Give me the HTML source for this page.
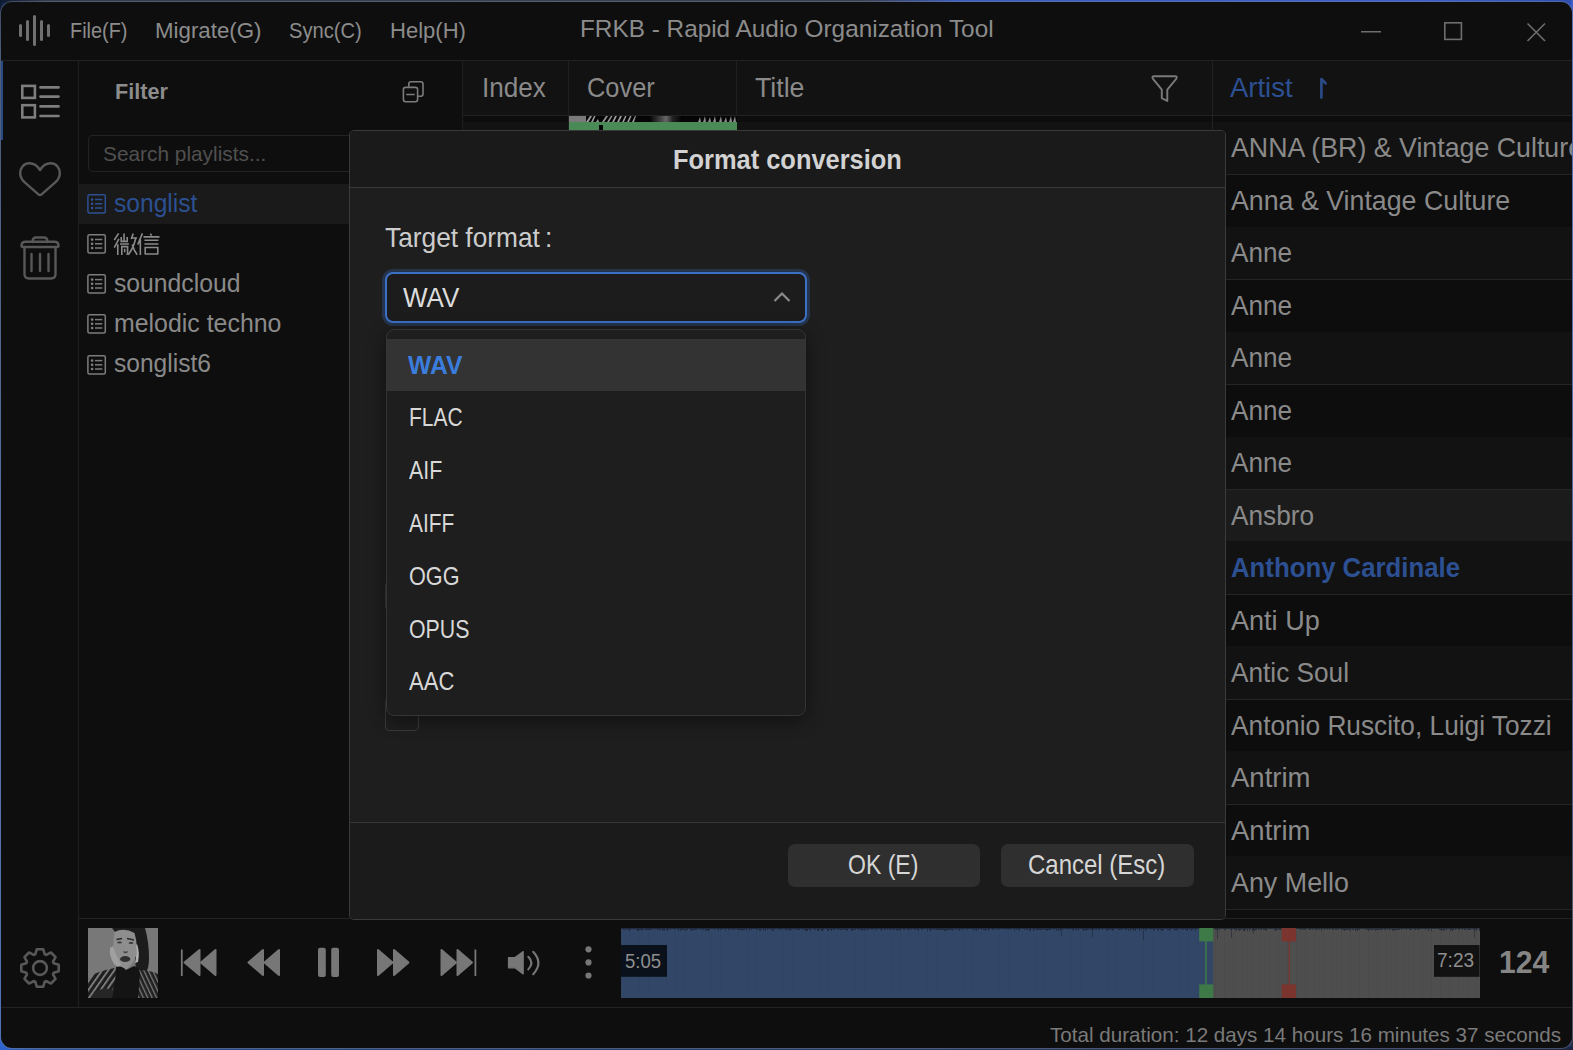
<!DOCTYPE html>
<html><head><meta charset="utf-8"><style>
html,body{margin:0;padding:0;width:1573px;height:1050px;overflow:hidden}
body{background:radial-gradient(ellipse at 0% 100%,#2a64d0 0%,rgba(42,100,208,0) 40%),radial-gradient(ellipse at 100% 0%,#3050c0 0%,rgba(48,80,192,0) 40%),linear-gradient(180deg,#13284e 0%,#1a3060 100%);font-family:"Liberation Sans",sans-serif;position:relative}
.abs{position:absolute}
.t{position:absolute;white-space:nowrap;line-height:1;transform-origin:0 0}
.bar{position:absolute;width:3px;background:#707070;border-radius:1.5px}
#win{position:absolute;left:1px;top:2px;width:1571px;height:1046px;background:#0e0e0e;border-radius:11px;overflow:hidden;box-shadow:0 0 0 1px rgba(120,130,150,0.45)}
#in{position:absolute;left:-1px;top:-2px;width:1573px;height:1050px}
</style></head><body>
<div class="abs" style="left:0;top:0;width:1573px;height:3px;background:linear-gradient(90deg,#0d1a33 0%,#343c4c 3%,#3a4252 55%,#3a5cc0 61%,#3d5fc8 90%,#2f4fb0 100%)"></div>
<div class="abs" style="left:0;top:0;width:2px;height:1050px;background:linear-gradient(180deg,#0d1a33 0%,#2a3a60 5%,#3f68b8 60%,#2f63d0 100%)"></div>
<div class="abs" style="left:1571px;top:0;width:2px;height:1050px;background:linear-gradient(180deg,#3d5fc8 0%,#3a5ab8 35%,#303a68 70%,#2a2c44 100%)"></div>
<div class="abs" style="left:0;top:1047px;width:1573px;height:3px;background:linear-gradient(90deg,#2f63d0 0%,#2e4f90 3%,#2a4070 30%,#2a3a60 60%,#1e2440 100%)"></div>
<div id="win"><div id="in">
<div class="abs" style="left:0;top:60px;width:1573px;height:1px;background:#222"></div>
<div class="abs" style="left:462px;top:61px;width:1111px;height:54px;background:#121212"></div>
<div class="abs" style="left:78px;top:61px;width:1px;height:946px;background:#1f1f1f"></div>
<div class="abs" style="left:462px;top:61px;width:1px;height:857px;background:#1f1f1f"></div>
<div class="abs" style="left:463px;top:116px;width:1109px;height:6px;background:#0d0d0d"></div>
<div class="abs" style="left:463px;top:122px;width:1109px;height:52px;background:#121212"></div>
<div class="abs" style="left:463px;top:174px;width:1109px;height:53px;background:#0d0d0d"></div>
<div class="abs" style="left:463px;top:227px;width:1109px;height:52px;background:#121212"></div>
<div class="abs" style="left:463px;top:279px;width:1109px;height:53px;background:#0d0d0d"></div>
<div class="abs" style="left:463px;top:332px;width:1109px;height:52px;background:#121212"></div>
<div class="abs" style="left:463px;top:384px;width:1109px;height:53px;background:#0d0d0d"></div>
<div class="abs" style="left:463px;top:437px;width:1109px;height:52px;background:#121212"></div>
<div class="abs" style="left:463px;top:489px;width:1109px;height:52px;background:#1b1b1b"></div>
<div class="abs" style="left:463px;top:541px;width:1109px;height:53px;background:#121212"></div>
<div class="abs" style="left:463px;top:594px;width:1109px;height:52px;background:#0d0d0d"></div>
<div class="abs" style="left:463px;top:646px;width:1109px;height:53px;background:#121212"></div>
<div class="abs" style="left:463px;top:699px;width:1109px;height:52px;background:#0d0d0d"></div>
<div class="abs" style="left:463px;top:751px;width:1109px;height:53px;background:#121212"></div>
<div class="abs" style="left:463px;top:804px;width:1109px;height:52px;background:#0d0d0d"></div>
<div class="abs" style="left:463px;top:856px;width:1109px;height:53px;background:#121212"></div>
<div class="abs" style="left:463px;top:174px;width:1109px;height:1px;background:#252525"></div>
<div class="abs" style="left:463px;top:279px;width:1109px;height:1px;background:#252525"></div>
<div class="abs" style="left:463px;top:384px;width:1109px;height:1px;background:#252525"></div>
<div class="abs" style="left:463px;top:489px;width:1109px;height:1px;background:#252525"></div>
<div class="abs" style="left:463px;top:594px;width:1109px;height:1px;background:#252525"></div>
<div class="abs" style="left:463px;top:699px;width:1109px;height:1px;background:#252525"></div>
<div class="abs" style="left:463px;top:804px;width:1109px;height:1px;background:#252525"></div>
<div class="abs" style="left:463px;top:909px;width:1109px;height:1px;background:#252525"></div>
<div class="abs" style="left:568px;top:61px;width:1px;height:70px;background:#1f1f1f"></div>
<div class="abs" style="left:736px;top:61px;width:1px;height:70px;background:#1f1f1f"></div>
<div class="abs" style="left:1212px;top:61px;width:1px;height:70px;background:#222"></div>
<div class="abs" style="left:463px;top:115px;width:1110px;height:1px;background:#222"></div>
<div class="abs" style="left:78px;top:918px;width:1495px;height:1px;background:#232323"></div>
<div class="abs" style="left:0;top:1007px;width:1573px;height:1px;background:#222"></div>

<div class="t" style="left:69.70px;top:19.28px;font-size:22.82px;color:#8c8c8c;transform:scaleX(0.8710);">File(F)</div>
<div class="t" style="left:154.90px;top:19.28px;font-size:22.82px;color:#8c8c8c;transform:scaleX(0.9768);">Migrate(G)</div>
<div class="t" style="left:289.20px;top:19.28px;font-size:22.82px;color:#8c8c8c;transform:scaleX(0.8835);">Sync(C)</div>
<div class="t" style="left:390.10px;top:19.28px;font-size:22.82px;color:#8c8c8c;transform:scaleX(0.9667);">Help(H)</div>
<div class="t" style="left:579.60px;top:18.04px;font-size:23.11px;color:#8c8c8c;transform:scaleX(1.0533);">FRKB - Rapid Audio Organization Tool</div>
<div class="bar" style="left:19px;top:24px;height:13px"></div>
<div class="bar" style="left:26px;top:20px;height:21px"></div>
<div class="bar" style="left:33px;top:15px;height:31px"></div>
<div class="bar" style="left:40px;top:20px;height:21px"></div>
<div class="bar" style="left:47px;top:24px;height:13px"></div>
<svg class="abs" style="left:1350px;top:15px" width="210" height="35" viewBox="1350 15 210 35">
<line x1="1361" y1="31.8" x2="1381" y2="31.8" stroke="#6e6e6e" stroke-width="1.6"/>
<rect x="1444.8" y="22.8" width="16.6" height="16.6" fill="none" stroke="#6e6e6e" stroke-width="1.6"/>
<path d="M1527.5 23.5 L1545 41 M1545 23.5 L1527.5 41" stroke="#6e6e6e" stroke-width="1.6"/>
</svg>
<div class="abs" style="left:1px;top:61px;width:2px;height:79px;background:#2a4a82"></div>
<svg class="abs" style="left:0;top:60px" width="78" height="240" viewBox="0 60 78 240">
<g fill="none" stroke="#7e7e7e" stroke-width="2.6">
<rect x="22.3" y="85.9" width="12.6" height="12"/>
<rect x="22.3" y="105.2" width="12.6" height="12.2"/>
</g>
<g stroke="#7e7e7e" stroke-width="2.6" stroke-linecap="round">
<line x1="40.5" y1="87.4" x2="58.5" y2="87.4"/><line x1="40.5" y1="96.6" x2="58.5" y2="96.6"/>
<line x1="40.5" y1="106.4" x2="58.5" y2="106.4"/><line x1="40.5" y1="116" x2="58.5" y2="116"/>
</g>
<path d="M40 170 C37 165.2 33.2 163.3 29.5 163.3 C24 163.3 20.2 167.6 20.2 173.3 C20.2 176.8 21.6 179.4 24.2 181.8 L38.4 194.4 Q40 195.8 41.6 194.4 L55.8 181.8 C58.4 179.4 59.8 176.8 59.8 173.3 C59.8 167.6 56 163.3 50.5 163.3 C46.8 163.3 43 165.2 40 170 Z" fill="none" stroke="#585858" stroke-width="2.4" stroke-linejoin="round"/>
<g fill="none" stroke="#585858" stroke-width="2.4" stroke-linecap="round" stroke-linejoin="round">
<path d="M21.5 245.5 Q21.5 241.8 25.5 241.8 L54.5 241.8 Q58.5 241.8 58.5 245.5 Q58.5 247 57 247 L23 247 Q21.5 247 21.5 245.5 Z"/>
<path d="M32.5 242 Q32.5 237.5 36 237.5 L44 237.5 Q47.5 237.5 47.5 242"/>
<path d="M24.5 247 L24.5 274 Q24.5 278.5 29 278.5 L51 278.5 Q55.5 278.5 55.5 274 L55.5 247"/>
<line x1="31.5" y1="254" x2="31.5" y2="271"/><line x1="40" y1="254" x2="40" y2="271"/><line x1="48.5" y1="254" x2="48.5" y2="271"/>
</g>
</svg>
<svg class="abs" style="left:0;top:920px" width="78" height="88" viewBox="0 920 78 88">
<path d="M53.70 963.25 L58.72 964.75 L58.72 971.25 L53.70 972.75 L53.05 974.33 L55.54 978.94 L50.94 983.54 L46.33 981.05 L44.75 981.70 L43.25 986.72 L36.75 986.72 L35.25 981.70 L33.67 981.05 L29.06 983.54 L24.46 978.94 L26.95 974.33 L26.30 972.75 L21.28 971.25 L21.28 964.75 L26.30 963.25 L26.95 961.67 L24.46 957.06 L29.06 952.46 L33.67 954.95 L35.25 954.30 L36.75 949.28 L43.25 949.28 L44.75 954.30 L46.33 954.95 L50.94 952.46 L55.54 957.06 L53.05 961.67 Z" fill="none" stroke="#585858" stroke-width="2.6" stroke-linejoin="round"/>
<circle cx="40" cy="968" r="6.9" fill="none" stroke="#585858" stroke-width="2.6"/>
</svg>
<div class="t" style="left:114.50px;top:79.86px;font-size:22.97px;color:#8c8c8c;font-weight:bold;transform:scaleX(0.9403);">Filter</div>
<svg class="abs" style="left:395px;top:75px" width="35" height="35" viewBox="395 75 35 35">
<g fill="none" stroke="#7c7c7c" stroke-width="1.6">
<path d="M408.8 86.8 L408.8 84 Q408.8 81.8 411 81.8 L420.8 81.8 Q423 81.8 423 84 L423 94 Q423 96.2 420.8 96.2 L418 96.2"/>
<rect x="403.4" y="87.4" width="14.2" height="14.4" rx="2.2"/>
</g>
<line x1="406.2" y1="94.5" x2="414.8" y2="94.5" stroke="#7c7c7c" stroke-width="1.6"/>
</svg>
<div class="abs" style="left:88px;top:135px;width:300px;height:37px;border:1px solid #222;border-radius:4px;background:#0e0e0e;box-sizing:border-box"></div>
<div class="t" style="left:102.70px;top:143.51px;font-size:20.78px;color:#505050;transform:scaleX(1.0033);">Search playlists...</div>
<div class="abs" style="left:79px;top:184px;width:290px;height:40px;background:#1a1a1a"></div>
<svg class="abs" style="left:85px;top:192px" width="24" height="24" viewBox="85 192 24 24">
<rect x="87.9" y="194.7" width="17.4" height="18.4" rx="1.5" fill="none" stroke="#2c5092" stroke-width="1.5"/>
<g fill="#2c5092"><circle cx="92.1" cy="199.6" r="1.35"/><circle cx="92.1" cy="203.8" r="1.35"/><circle cx="92.1" cy="208" r="1.35"/></g>
<g stroke="#2c5092" stroke-width="1.5"><line x1="95" y1="199.6" x2="102.3" y2="199.6"/><line x1="95" y1="203.8" x2="102.3" y2="203.8"/><line x1="95" y1="208" x2="102.3" y2="208"/></g>
</svg>
<div class="t" style="left:113.90px;top:190.75px;font-size:25.81px;color:#2c5092;transform:scaleX(0.9541);">songlist</div>
<svg class="abs" style="left:85px;top:232px" width="24" height="24" viewBox="85 232 24 24">
<rect x="87.9" y="234.7" width="17.4" height="18.4" rx="1.5" fill="none" stroke="#7c7c7c" stroke-width="1.5"/>
<g fill="#7c7c7c"><circle cx="92.1" cy="239.6" r="1.35"/><circle cx="92.1" cy="243.8" r="1.35"/><circle cx="92.1" cy="248" r="1.35"/></g>
<g stroke="#7c7c7c" stroke-width="1.5"><line x1="95" y1="239.6" x2="102.3" y2="239.6"/><line x1="95" y1="243.8" x2="102.3" y2="243.8"/><line x1="95" y1="248" x2="102.3" y2="248"/></g>
</svg>
<svg class="abs" style="left:110px;top:228px" width="55" height="32" viewBox="110 228 55 32">
<g fill="none" stroke="#8a8a8a" stroke-width="1.6" stroke-linecap="butt" stroke-linejoin="miter">
<path d="M118.6 233.4 L114.3 240 M118.9 238.9 L114.3 247.7 M117.75 244.2 L117.75 254.9"/>
<path d="M124.05 233.4 L124.05 241.4 M121.2 237 L121.2 241.4 L127.2 241.4 L127.2 237 M120 244 L128.9 244"/>
<path d="M121.8 254.9 L121.8 246.6 L127.6 246.6 L127.6 253.8 L126.5 254.6 M124.7 248.8 L124.7 252.2"/>
<path d="M133.2 233.4 L131.3 239 M131.5 238 L137 238 M135.6 238.8 Q133.5 248 128.2 254.8 M132.2 244.4 Q134 250.5 137.2 254.7"/>
<path d="M142.4 233.4 L137.8 244.6 M140.35 239.4 L140.35 254.9"/>
<path d="M150.3 233.6 L151.6 235.6 M143.5 236.9 L159.5 236.9 M144.4 240.3 L158.4 240.3 M144.4 244 L158.4 244 M145.2 254.6 L145.2 247.45 L157.8 247.45 L157.8 254.6 M145.2 254 L157.8 254"/>
</g></svg>
<svg class="abs" style="left:85px;top:272px" width="24" height="24" viewBox="85 272 24 24">
<rect x="87.9" y="274.7" width="17.4" height="18.4" rx="1.5" fill="none" stroke="#7c7c7c" stroke-width="1.5"/>
<g fill="#7c7c7c"><circle cx="92.1" cy="279.6" r="1.35"/><circle cx="92.1" cy="283.8" r="1.35"/><circle cx="92.1" cy="288" r="1.35"/></g>
<g stroke="#7c7c7c" stroke-width="1.5"><line x1="95" y1="279.6" x2="102.3" y2="279.6"/><line x1="95" y1="283.8" x2="102.3" y2="283.8"/><line x1="95" y1="288" x2="102.3" y2="288"/></g>
</svg>
<div class="t" style="left:113.90px;top:270.75px;font-size:25.81px;color:#8a8a8a;transform:scaleX(0.9583);">soundcloud</div>
<svg class="abs" style="left:85px;top:312px" width="24" height="24" viewBox="85 312 24 24">
<rect x="87.9" y="314.7" width="17.4" height="18.4" rx="1.5" fill="none" stroke="#7c7c7c" stroke-width="1.5"/>
<g fill="#7c7c7c"><circle cx="92.1" cy="319.6" r="1.35"/><circle cx="92.1" cy="323.8" r="1.35"/><circle cx="92.1" cy="328" r="1.35"/></g>
<g stroke="#7c7c7c" stroke-width="1.5"><line x1="95" y1="319.6" x2="102.3" y2="319.6"/><line x1="95" y1="323.8" x2="102.3" y2="323.8"/><line x1="95" y1="328" x2="102.3" y2="328"/></g>
</svg>
<div class="t" style="left:113.90px;top:310.75px;font-size:25.81px;color:#8a8a8a;transform:scaleX(0.9650);">melodic techno</div>
<svg class="abs" style="left:85px;top:352.7px" width="24" height="24" viewBox="85 352.7 24 24">
<rect x="87.9" y="355.4" width="17.4" height="18.4" rx="1.5" fill="none" stroke="#7c7c7c" stroke-width="1.5"/>
<g fill="#7c7c7c"><circle cx="92.1" cy="360.3" r="1.35"/><circle cx="92.1" cy="364.5" r="1.35"/><circle cx="92.1" cy="368.7" r="1.35"/></g>
<g stroke="#7c7c7c" stroke-width="1.5"><line x1="95" y1="360.3" x2="102.3" y2="360.3"/><line x1="95" y1="364.5" x2="102.3" y2="364.5"/><line x1="95" y1="368.7" x2="102.3" y2="368.7"/></g>
</svg>
<div class="t" style="left:113.90px;top:350.75px;font-size:25.81px;color:#8a8a8a;transform:scaleX(0.9523);">songlist6</div>
<div class="t" style="left:481.50px;top:74.00px;font-size:27.76px;color:#8a8a8a;transform:scaleX(0.9410);">Index</div>
<div class="t" style="left:586.50px;top:74.00px;font-size:27.76px;color:#8a8a8a;transform:scaleX(0.9154);">Cover</div>
<div class="t" style="left:754.50px;top:74.00px;font-size:27.76px;color:#8a8a8a;transform:scaleX(0.9628);">Title</div>
<div class="t" style="left:1230.40px;top:74.00px;font-size:27.76px;color:#2c5092;transform:scaleX(0.9899);">Artist</div>
<svg class="abs" style="left:1140px;top:65px" width="200" height="45" viewBox="1140 65 200 45">
<path d="M1154.3 76.2 L1174.9 76.2 Q1177.9 76.2 1176.2 78.8 L1167.3 89.6 L1167.3 101 L1161.8 98.2 L1161.8 89.6 L1153 78.8 Q1151.3 76.2 1154.3 76.2 Z" fill="none" stroke="#7a7a7a" stroke-width="1.9" stroke-linejoin="round"/>
<path d="M1321.4 97.6 L1321.4 79 L1325.6 83.4" fill="none" stroke="#2a4a86" stroke-width="2.7" stroke-linecap="round" stroke-linejoin="round"/>
</svg>
<svg class="abs" style="left:569px;top:116px" width="168" height="14" viewBox="0 0 168 14">
<defs><linearGradient id="cg" x1="0" x2="1"><stop offset="0" stop-color="#000"/><stop offset="0.35" stop-color="#444"/><stop offset="0.5" stop-color="#666"/><stop offset="0.7" stop-color="#222"/><stop offset="1" stop-color="#000"/></linearGradient></defs>
<rect x="0" y="0" width="168" height="6" fill="#050505"/>
<rect x="0" y="0" width="17" height="6" fill="#7a7a7a"/>
<path d="M17 6 L21 0 L23 0 L19.5 6 Z M22 6 L25 0 L26.5 0 L24 6 Z M27 6 L29 3 L30 6 Z M33 6 L37 0 L39 0 L35 6 Z M38 6 L42 0 L43.5 0 L40 6 Z M43 6 L46 0 L48 0 L45 6 Z M48 6 L51 0 L53 0 L50 6 Z M53 6 L56 0 L57.5 0 L55 6 Z M58 6 L61 0 L62.5 0 L60 6 Z M63 6 L66 0 L67 0 L65 6 Z" fill="#9a9a9a"/>
<rect x="80" y="0" width="34" height="6" fill="url(#cg)"/>
<path d="M129 6 L131 1 L132 6 Z M134 6 L136 0 L137 6 Z M139 6 L141 1 L142 6 Z M144 6 L146 0 L147 6 Z M150 6 L152 0 L153 6 Z M155 6 L157 1 L158 6 Z M160 6 L162 0 L163 6 Z M164 6 L166 0 L167 6 Z" fill="#8a8a8a"/>
<rect x="0" y="6" width="168" height="8" fill="#4a8a56"/>
<rect x="30" y="9" width="4" height="5" fill="#000"/>
</svg>
<div class="t" style="left:1231.00px;top:134.17px;font-size:27.33px;color:#8a8a8a;transform:scaleX(0.9793);">ANNA (BR) &amp; Vintage Culture</div>
<div class="t" style="left:1231.00px;top:186.67px;font-size:27.33px;color:#8a8a8a;transform:scaleX(0.9793);">Anna &amp; Vintage Culture</div>
<div class="t" style="left:1231.00px;top:239.17px;font-size:27.33px;color:#8a8a8a;transform:scaleX(0.9560);">Anne</div>
<div class="t" style="left:1231.00px;top:291.67px;font-size:27.33px;color:#8a8a8a;transform:scaleX(0.9560);">Anne</div>
<div class="t" style="left:1231.00px;top:344.17px;font-size:27.33px;color:#8a8a8a;transform:scaleX(0.9560);">Anne</div>
<div class="t" style="left:1231.00px;top:396.67px;font-size:27.33px;color:#8a8a8a;transform:scaleX(0.9560);">Anne</div>
<div class="t" style="left:1231.00px;top:449.17px;font-size:27.33px;color:#8a8a8a;transform:scaleX(0.9560);">Anne</div>
<div class="t" style="left:1231.00px;top:501.67px;font-size:27.33px;color:#8a8a8a;transform:scaleX(0.9588);">Ansbro</div>
<div class="t" style="left:1231.00px;top:554.17px;font-size:27.33px;color:#2c5092;font-weight:bold;transform:scaleX(0.9427);">Anthony Cardinale</div>
<div class="t" style="left:1231.00px;top:606.67px;font-size:27.33px;color:#8a8a8a;transform:scaleX(0.9899);">Anti Up</div>
<div class="t" style="left:1231.00px;top:659.17px;font-size:27.33px;color:#8a8a8a;transform:scaleX(0.9592);">Antic Soul</div>
<div class="t" style="left:1231.00px;top:711.67px;font-size:27.33px;color:#8a8a8a;transform:scaleX(0.9611);">Antonio Ruscito, Luigi Tozzi</div>
<div class="t" style="left:1231.00px;top:764.17px;font-size:27.33px;color:#8a8a8a;transform:scaleX(1.0070);">Antrim</div>
<div class="t" style="left:1231.00px;top:816.67px;font-size:27.33px;color:#8a8a8a;transform:scaleX(1.0070);">Antrim</div>
<div class="t" style="left:1231.00px;top:869.17px;font-size:27.33px;color:#8a8a8a;transform:scaleX(0.9834);">Any Mello</div>
<div class="abs" style="left:349px;top:130px;width:877px;height:790px;background:#1e1e1e;border:1px solid #3a3a3a;border-radius:5px;box-sizing:border-box;overflow:hidden"><div class="abs" style="left:0;top:0;width:100%;height:56px;background:#1a1a1a;border-bottom:1px solid #383838"></div><div class="abs" style="left:0;top:691px;width:100%;height:98px;background:#1b1b1b;border-top:1px solid #363636"></div></div>
<div class="t" style="left:672.60px;top:146.02px;font-size:27.62px;color:#d2d2d2;font-weight:bold;transform:scaleX(0.9207);">Format conversion</div>
<div class="t" style="left:384.90px;top:225.44px;font-size:26.89px;color:#cccccc;transform:scaleX(0.9780);">Target format :</div>
<div class="abs" style="left:385px;top:582px;width:30px;height:28px;border-left:1px solid #3a3a3a;border-top-left-radius:4px;border-bottom-left-radius:4px"></div>
<div class="abs" style="left:385px;top:697px;width:34px;height:34px;border:1px solid #3a3a3a;border-radius:4px;box-sizing:border-box"></div>
<div class="abs" style="left:385px;top:272px;width:422px;height:51px;border:2px solid #3b70c4;border-radius:8px;box-sizing:border-box;background:#1c1c1c;box-shadow:0 0 0 3px rgba(59,112,196,0.28)"></div>
<div class="t" style="left:403.00px;top:284.12px;font-size:27.62px;color:#dcdcdc;transform:scaleX(0.9424);">WAV</div>
<svg class="abs" style="left:770px;top:288px" width="24" height="18" viewBox="770 288 24 18"><path d="M774.5 301 L782 293.5 L789.5 301" fill="none" stroke="#8a8a8a" stroke-width="2.2"/></svg>
<div class="abs" style="left:386px;top:329px;width:420px;height:387px;border:1px solid #353535;border-radius:8px;box-sizing:border-box;background:#1e1e1e;box-shadow:0 4px 18px rgba(0,0,0,0.45);overflow:hidden"><div class="abs" style="left:0;top:9px;width:100%;height:52px;background:#333333"></div></div>
<div class="t" style="left:408.30px;top:352.50px;font-size:25.87px;color:#3b7ddd;font-weight:bold;transform:scaleX(0.9540);">WAV</div>
<div class="t" style="left:408.90px;top:405.30px;font-size:25.87px;color:#d8d8d8;transform:scaleX(0.8120);">FLAC</div>
<div class="t" style="left:408.90px;top:458.10px;font-size:25.87px;color:#d8d8d8;transform:scaleX(0.8272);">AIF</div>
<div class="t" style="left:408.90px;top:510.90px;font-size:25.87px;color:#d8d8d8;transform:scaleX(0.8080);">AIFF</div>
<div class="t" style="left:408.90px;top:563.70px;font-size:25.87px;color:#d8d8d8;transform:scaleX(0.8367);">OGG</div>
<div class="t" style="left:408.90px;top:616.50px;font-size:25.87px;color:#d8d8d8;transform:scaleX(0.8251);">OPUS</div>
<div class="t" style="left:408.90px;top:669.30px;font-size:25.87px;color:#d8d8d8;transform:scaleX(0.8516);">AAC</div>
<div class="abs" style="left:788px;top:844px;width:192px;height:43px;background:#2f2f2f;border-radius:7px"></div>
<div class="abs" style="left:1001px;top:844px;width:193px;height:43px;background:#2f2f2f;border-radius:7px"></div>
<div class="t" style="left:847.70px;top:852.44px;font-size:26.89px;color:#d6d6d6;transform:scaleX(0.8567);">OK (E)</div>
<div class="t" style="left:1027.90px;top:852.44px;font-size:26.89px;color:#d6d6d6;transform:scaleX(0.8927);">Cancel (Esc)</div>
<svg class="abs" style="left:170px;top:930px" width="440" height="65" viewBox="170 930 440 65">
<g fill="#777777" stroke="#777777" stroke-width="2" stroke-linejoin="round">
<path d="M184.5 962.4 L199.5 950 L199.5 975 Z"/><path d="M201 962.4 L215.5 950 L215.5 975 Z"/>
<path d="M248.5 962.4 L263 950 L263 975 Z"/><path d="M264.5 962.4 L279 950 L279 975 Z"/>
<path d="M378 950 L392.5 962.4 L378 975 Z"/><path d="M394 950 L408.5 962.4 L394 975 Z"/>
<path d="M441.5 950 L456 962.4 L441.5 975 Z"/><path d="M457.5 950 L472 962.4 L457.5 975 Z"/>
</g>
<rect x="180.9" y="949.5" width="1.8" height="26.5" fill="#777777"/>
<rect x="474.5" y="949.5" width="1.8" height="26.5" fill="#777777"/>
<rect x="318" y="947.7" width="7.8" height="29.3" rx="2" fill="#777777"/>
<rect x="331.2" y="947.7" width="7.8" height="29.3" rx="2" fill="#777777"/>
<path d="M508.5 957.6 L515 957.6 L523.2 951.6 L523.2 974 L515 967.8 L508.5 967.8 Z" fill="#777777" stroke="#777777" stroke-width="1.2" stroke-linejoin="round"/>
<path d="M528.3 956.8 Q534.5 962.9 528.3 969.4" fill="none" stroke="#777777" stroke-width="2.1" stroke-linecap="round"/>
<path d="M533.2 951.8 Q543.6 963 533.2 974.2" fill="none" stroke="#777777" stroke-width="2.1" stroke-linecap="round"/>
<circle cx="588.5" cy="949.3" r="3.1" fill="#777777"/><circle cx="588.5" cy="962.4" r="3.1" fill="#777777"/><circle cx="588.5" cy="975.5" r="3.1" fill="#777777"/>
</svg>
<svg class="abs" style="left:88px;top:928px" width="70" height="70" viewBox="0 0 70 70">
<defs><pattern id="zb" width="5" height="5" patternUnits="userSpaceOnUse" patternTransform="rotate(35)">
<rect width="5" height="5" fill="#1e1e1e"/><rect width="1.6" height="5" fill="#8c8c8c"/></pattern>
<pattern id="zb2" width="4" height="4" patternUnits="userSpaceOnUse" patternTransform="rotate(-25)">
<rect width="4" height="4" fill="#202020"/><rect width="1.3" height="4" fill="#7a7a7a"/></pattern></defs>
<rect width="70" height="70" fill="#787878"/>
<path d="M24 0 L57 0 Q61 14 61 30 Q61 40 58 44 L48 42 L46 20 L30 8 Z" fill="#1c1c1c"/>
<path d="M26.5 4 Q36 -1 46.5 5 Q50 16 48 28 Q44 38 37 42 Q30 40 27 30 Q24 18 26.5 4 Z" fill="#8e8e8e"/>
<path d="M28.5 11.5 L34 10.5 M39 10.5 L46 12" stroke="#2a2a2a" stroke-width="1.4"/>
<ellipse cx="31.5" cy="14.5" rx="2.4" ry="1.1" fill="#3a3a3a"/><ellipse cx="43" cy="15" rx="2.4" ry="1.1" fill="#3a3a3a"/>
<path d="M35.5 23.5 Q37.5 25.5 39.5 23.5" stroke="#444" stroke-width="1.4" fill="none"/>
<ellipse cx="37.2" cy="31" rx="5.2" ry="3" fill="#303030"/>
<path d="M22 20 Q21 28 26 36 L31 40 L33 36 Q28 28 25 18 Z" fill="#a0a0a0"/>
<path d="M49 16 Q52 24 50 34 L47 35 Q49 25 48 17 Z" fill="#b0b0b0"/>
<path d="M0 52 Q6 44 18 42 Q26 40 32 39 L36 44 L34 70 L0 70 Z" fill="url(#zb)"/>
<path d="M50 42 Q62 42 70 46 L70 70 L44 70 Z" fill="url(#zb2)"/>
<path d="M28 39 Q34 37 38 42 L46 38 Q52 40 52 46 L50 70 L22 70 Q28 56 28 39 Z" fill="#141414"/>
<path d="M6 64 Q16 58 26 62 L24 70 L4 70 Z" fill="#262626"/>
</svg>
<svg class="abs" style="left:621px;top:928px" width="859" height="70" viewBox="0 0 859 70"><rect x="0" y="0" width="592" height="70" fill="#324767"/><rect x="592" y="0" width="267" height="70" fill="#4e4e4e"/><path d="M0.5 0 V1 M1.5 0 V1 M2.5 0 V2 M3.5 0 V2 M4.5 0 V1 M5.5 0 V2 M6.5 0 V1 M7.5 0 V2 M8.5 0 V3 M9.5 0 V2 M10.5 0 V1 M11.5 0 V1 M12.5 0 V2 M13.5 0 V1 M14.5 0 V1 M15.5 0 V2 M16.5 0 V3 M17.5 0 V3 M18.5 0 V2 M19.5 0 V2 M20.5 0 V2 M21.5 0 V3 M22.5 0 V1 M23.5 0 V1 M24.5 0 V2 M25.5 0 V2 M26.5 0 V2 M27.5 0 V2 M28.5 0 V2 M29.5 0 V2 M30.5 0 V2 M31.5 0 V1 M32.5 0 V1 M33.5 0 V2 M34.5 0 V1 M35.5 0 V1 M36.5 0 V2 M37.5 0 V2 M38.5 0 V2 M39.5 0 V2 M40.5 0 V1 M41.5 0 V3 M42.5 0 V2 M43.5 0 V3 M44.5 0 V1 M45.5 0 V2 M46.5 0 V3 M47.5 0 V2 M48.5 0 V1 M49.5 0 V2 M50.5 0 V1 M51.5 0 V1 M52.5 0 V1 M53.5 0 V2 M54.5 0 V1 M55.5 0 V1 M56.5 0 V1 M57.5 0 V3 M58.5 0 V1 M59.5 0 V3 M60.5 0 V2 M61.5 0 V2 M62.5 0 V2 M63.5 0 V1 M64.5 0 V3 M65.5 0 V2 M66.5 0 V2 M67.5 0 V1 M68.5 0 V1 M69.5 0 V2 M70.5 0 V3 M71.5 0 V2 M72.5 0 V2 M73.5 0 V2 M74.5 0 V2 M75.5 0 V2 M76.5 0 V1 M77.5 0 V1 M78.5 0 V1 M79.5 0 V2 M80.5 0 V1 M81.5 0 V2 M82.5 0 V2 M83.5 0 V1 M84.5 0 V3 M85.5 0 V2 M86.5 0 V3 M87.5 0 V3 M88.5 0 V2 M89.5 0 V1 M90.5 0 V1 M91.5 0 V1 M92.5 0 V1 M93.5 0 V2 M94.5 0 V1 M95.5 0 V1 M96.5 0 V1 M97.5 0 V3 M98.5 0 V1 M99.5 0 V2 M100.5 0 V2 M101.5 0 V1 M102.5 0 V1 M103.5 0 V1 M104.5 0 V3 M105.5 0 V1 M106.5 0 V1 M107.5 0 V2 M108.5 0 V2 M109.5 0 V1 M110.5 0 V2 M111.5 0 V1 M112.5 0 V2 M113.5 0 V2 M114.5 0 V1 M115.5 0 V1 M116.5 0 V2 M117.5 0 V2 M118.5 0 V2 M119.5 0 V2 M120.5 0 V2 M121.5 0 V3 M122.5 0 V2 M123.5 0 V2 M124.5 0 V1 M125.5 0 V3 M126.5 0 V1 M127.5 0 V1 M128.5 0 V3 M129.5 0 V1 M130.5 0 V2 M131.5 0 V1 M132.5 0 V1 M133.5 0 V1 M134.5 0 V1 M135.5 0 V2 M136.5 0 V2 M137.5 0 V1 M138.5 0 V3 M139.5 0 V3 M140.5 0 V1 M141.5 0 V1 M142.5 0 V3 M143.5 0 V1 M144.5 0 V3 M145.5 0 V1 M146.5 0 V2 M147.5 0 V1 M148.5 0 V1 M149.5 0 V2 M150.5 0 V1 M151.5 0 V3 M152.5 0 V3 M153.5 0 V1 M154.5 0 V1 M155.5 0 V1 M156.5 0 V1 M157.5 0 V2 M158.5 0 V1 M159.5 0 V2 M160.5 0 V2 M161.5 0 V1 M162.5 0 V1 M163.5 0 V1 M164.5 0 V2 M165.5 0 V3 M166.5 0 V1 M167.5 0 V2 M168.5 0 V3 M169.5 0 V2 M170.5 0 V2 M171.5 0 V1 M172.5 0 V2 M173.5 0 V1 M174.5 0 V2 M175.5 0 V1 M176.5 0 V2 M177.5 0 V2 M178.5 0 V2 M179.5 0 V1 M180.5 0 V1 M181.5 0 V2 M182.5 0 V1 M183.5 0 V2 M184.5 0 V3 M185.5 0 V3 M186.5 0 V3 M187.5 0 V1 M188.5 0 V2 M189.5 0 V3 M190.5 0 V1 M191.5 0 V1 M192.5 0 V1 M193.5 0 V2 M194.5 0 V2 M195.5 0 V1 M196.5 0 V3 M197.5 0 V3 M198.5 0 V2 M199.5 0 V1 M200.5 0 V3 M201.5 0 V3 M202.5 0 V2 M203.5 0 V1 M204.5 0 V1 M205.5 0 V1 M206.5 0 V3 M207.5 0 V3 M208.5 0 V1 M209.5 0 V2 M210.5 0 V3 M211.5 0 V1 M212.5 0 V2 M213.5 0 V2 M214.5 0 V1 M215.5 0 V1 M216.5 0 V2 M217.5 0 V1 M218.5 0 V2 M219.5 0 V2 M220.5 0 V2 M221.5 0 V2 M222.5 0 V1 M223.5 0 V2 M224.5 0 V2 M225.5 0 V2 M226.5 0 V3 M227.5 0 V1 M228.5 0 V1 M229.5 0 V1 M230.5 0 V3 M231.5 0 V3 M232.5 0 V2 M233.5 0 V2 M234.5 0 V2 M235.5 0 V1 M236.5 0 V1 M237.5 0 V2 M238.5 0 V2 M239.5 0 V1 M240.5 0 V3 M241.5 0 V2 M242.5 0 V2 M243.5 0 V2 M244.5 0 V3 M245.5 0 V1 M246.5 0 V2 M247.5 0 V2 M248.5 0 V1 M249.5 0 V1 M250.5 0 V2 M251.5 0 V2 M252.5 0 V1 M253.5 0 V1 M254.5 0 V3 M255.5 0 V1 M256.5 0 V2 M257.5 0 V1 M258.5 0 V1 M259.5 0 V2 M260.5 0 V3 M261.5 0 V1 M262.5 0 V1 M263.5 0 V2 M264.5 0 V2 M265.5 0 V1 M266.5 0 V2 M267.5 0 V1 M268.5 0 V2 M269.5 0 V2 M270.5 0 V2 M271.5 0 V1 M272.5 0 V2 M273.5 0 V2 M274.5 0 V1 M275.5 0 V2 M276.5 0 V3 M277.5 0 V2 M278.5 0 V2 M279.5 0 V3 M280.5 0 V1 M281.5 0 V1 M282.5 0 V2 M283.5 0 V2 M284.5 0 V1 M285.5 0 V1 M286.5 0 V2 M287.5 0 V2 M288.5 0 V2 M289.5 0 V1 M290.5 0 V2 M291.5 0 V1 M292.5 0 V1 M293.5 0 V2 M294.5 0 V2 M295.5 0 V1 M296.5 0 V2 M297.5 0 V3 M298.5 0 V1 M299.5 0 V1 M300.5 0 V2 M301.5 0 V2 M302.5 0 V1 M303.5 0 V1 M304.5 0 V1 M305.5 0 V1 M306.5 0 V3 M307.5 0 V1 M308.5 0 V2 M309.5 0 V3 M310.5 0 V2 M311.5 0 V1 M312.5 0 V2 M313.5 0 V1 M314.5 0 V2 M315.5 0 V2 M316.5 0 V2 M317.5 0 V2 M318.5 0 V2 M319.5 0 V2 M320.5 0 V2 M321.5 0 V2 M322.5 0 V2 M323.5 0 V3 M324.5 0 V3 M325.5 0 V3 M326.5 0 V2 M327.5 0 V2 M328.5 0 V2 M329.5 0 V2 M330.5 0 V2 M331.5 0 V3 M332.5 0 V1 M333.5 0 V2 M334.5 0 V1 M335.5 0 V2 M336.5 0 V1 M337.5 0 V2 M338.5 0 V3 M339.5 0 V1 M340.5 0 V2 M341.5 0 V1 M342.5 0 V2 M343.5 0 V1 M344.5 0 V1 M345.5 0 V1 M346.5 0 V2 M347.5 0 V1 M348.5 0 V1 M349.5 0 V1 M350.5 0 V1 M351.5 0 V1 M352.5 0 V3 M353.5 0 V1 M354.5 0 V2 M355.5 0 V3 M356.5 0 V1 M357.5 0 V2 M358.5 0 V1 M359.5 0 V1 M360.5 0 V2 M361.5 0 V1 M362.5 0 V2 M363.5 0 V2 M364.5 0 V3 M365.5 0 V2 M366.5 0 V1 M367.5 0 V3 M368.5 0 V2 M369.5 0 V1 M370.5 0 V1 M371.5 0 V2 M372.5 0 V2 M373.5 0 V1 M374.5 0 V1 M375.5 0 V1 M376.5 0 V2 M377.5 0 V1 M378.5 0 V2 M379.5 0 V1 M380.5 0 V1 M381.5 0 V1 M382.5 0 V1 M383.5 0 V1 M384.5 0 V1 M385.5 0 V2 M386.5 0 V1 M387.5 0 V2 M388.5 0 V1 M389.5 0 V2 M390.5 0 V1 M391.5 0 V1 M392.5 0 V1 M393.5 0 V3 M394.5 0 V1 M395.5 0 V2 M396.5 0 V1 M397.5 0 V2 M398.5 0 V3 M399.5 0 V1 M400.5 0 V1 M401.5 0 V1 M402.5 0 V1 M403.5 0 V2 M404.5 0 V1 M405.5 0 V2 M406.5 0 V2 M407.5 0 V1 M408.5 0 V3 M409.5 0 V3 M410.5 0 V1 M411.5 0 V1 M412.5 0 V3 M413.5 0 V2 M414.5 0 V1 M415.5 0 V2 M416.5 0 V2 M417.5 0 V2 M418.5 0 V2 M419.5 0 V2 M420.5 0 V2 M421.5 0 V2 M422.5 0 V1 M423.5 0 V2 M424.5 0 V2 M425.5 0 V2 M426.5 0 V3 M427.5 0 V2 M428.5 0 V2 M429.5 0 V2 M430.5 0 V1 M431.5 0 V1 M432.5 0 V1 M433.5 0 V2 M434.5 0 V1 M435.5 0 V3 M436.5 0 V1 M437.5 0 V3 M438.5 0 V2 M439.5 0 V2 M440.5 0 V1 M441.5 0 V2 M442.5 0 V1 M443.5 0 V1 M444.5 0 V1 M445.5 0 V1 M446.5 0 V1 M447.5 0 V2 M448.5 0 V1 M449.5 0 V1 M450.5 0 V1 M451.5 0 V2 M452.5 0 V3 M453.5 0 V1 M454.5 0 V2 M455.5 0 V2 M456.5 0 V1 M457.5 0 V3 M458.5 0 V1 M459.5 0 V1 M460.5 0 V1 M461.5 0 V2 M462.5 0 V3 M463.5 0 V2 M464.5 0 V2 M465.5 0 V3 M466.5 0 V2 M467.5 0 V2 M468.5 0 V1 M469.5 0 V2 M470.5 0 V2 M471.5 0 V2 M472.5 0 V2 M473.5 0 V1 M474.5 0 V2 M475.5 0 V2 M476.5 0 V1 M477.5 0 V2 M478.5 0 V2 M479.5 0 V1 M480.5 0 V1 M481.5 0 V2 M482.5 0 V1 M483.5 0 V1 M484.5 0 V1 M485.5 0 V3 M486.5 0 V2 M487.5 0 V2 M488.5 0 V2 M489.5 0 V1 M490.5 0 V2 M491.5 0 V3 M492.5 0 V2 M493.5 0 V1 M494.5 0 V1 M495.5 0 V1 M496.5 0 V1 M497.5 0 V2 M498.5 0 V2 M499.5 0 V2 M500.5 0 V2 M501.5 0 V1 M502.5 0 V1 M503.5 0 V1 M504.5 0 V2 M505.5 0 V2 M506.5 0 V1 M507.5 0 V3 M508.5 0 V1 M509.5 0 V3 M510.5 0 V1 M511.5 0 V2 M512.5 0 V2 M513.5 0 V2 M514.5 0 V3 M515.5 0 V1 M516.5 0 V1 M517.5 0 V1 M518.5 0 V3 M519.5 0 V1 M520.5 0 V2 M521.5 0 V1 M522.5 0 V1 M523.5 0 V1 M524.5 0 V3 M525.5 0 V2 M526.5 0 V1 M527.5 0 V1 M528.5 0 V1 M529.5 0 V2 M530.5 0 V1 M531.5 0 V1 M532.5 0 V3 M533.5 0 V2 M534.5 0 V1 M535.5 0 V1 M536.5 0 V2 M537.5 0 V3 M538.5 0 V1 M539.5 0 V2 M540.5 0 V3 M541.5 0 V3 M542.5 0 V2 M543.5 0 V1 M544.5 0 V1 M545.5 0 V1 M546.5 0 V2 M547.5 0 V2 M548.5 0 V3 M549.5 0 V2 M550.5 0 V1 M551.5 0 V1 M552.5 0 V1 M553.5 0 V3 M554.5 0 V2 M555.5 0 V2 M556.5 0 V3 M557.5 0 V1 M558.5 0 V1 M559.5 0 V1 M560.5 0 V2 M561.5 0 V1 M562.5 0 V2 M563.5 0 V1 M564.5 0 V2 M565.5 0 V2 M566.5 0 V3 M567.5 0 V1 M568.5 0 V2 M569.5 0 V1 M570.5 0 V3 M571.5 0 V2 M572.5 0 V1 M573.5 0 V1 M574.5 0 V3 M575.5 0 V1 M576.5 0 V1 M577.5 0 V1 M578.5 0 V2 M579.5 0 V1 M580.5 0 V2 M581.5 0 V1 M582.5 0 V1 M583.5 0 V2 M584.5 0 V2 M585.5 0 V1 M586.5 0 V3 M587.5 0 V1 M588.5 0 V2 M589.5 0 V1 M590.5 0 V2 M591.5 0 V2 M592.5 0 V1 M593.5 0 V1 M594.5 0 V2 M595.5 0 V2 M596.5 0 V2 M597.5 0 V1 M598.5 0 V2 M599.5 0 V1 M600.5 0 V1 M601.5 0 V1 M602.5 0 V1 M603.5 0 V2 M604.5 0 V2 M605.5 0 V1 M606.5 0 V1 M607.5 0 V1 M608.5 0 V1 M609.5 0 V2 M610.5 0 V1 M611.5 0 V1 M612.5 0 V1 M613.5 0 V2 M614.5 0 V2 M615.5 0 V3 M616.5 0 V1 M617.5 0 V2 M618.5 0 V3 M619.5 0 V2 M620.5 0 V2 M621.5 0 V1 M622.5 0 V3 M623.5 0 V3 M624.5 0 V2 M625.5 0 V1 M626.5 0 V3 M627.5 0 V1 M628.5 0 V3 M629.5 0 V1 M630.5 0 V1 M631.5 0 V3 M632.5 0 V2 M633.5 0 V3 M634.5 0 V2 M635.5 0 V2 M636.5 0 V1 M637.5 0 V2 M638.5 0 V1 M639.5 0 V2 M640.5 0 V2 M641.5 0 V1 M642.5 0 V2 M643.5 0 V2 M644.5 0 V2 M645.5 0 V3 M646.5 0 V1 M647.5 0 V1 M648.5 0 V1 M649.5 0 V1 M650.5 0 V1 M651.5 0 V1 M652.5 0 V1 M653.5 0 V2 M654.5 0 V3 M655.5 0 V2 M656.5 0 V2 M657.5 0 V1 M658.5 0 V2 M659.5 0 V2 M660.5 0 V1 M661.5 0 V2 M662.5 0 V1 M663.5 0 V1 M664.5 0 V2 M665.5 0 V2 M666.5 0 V2 M667.5 0 V1 M668.5 0 V2 M669.5 0 V2 M670.5 0 V2 M671.5 0 V1 M672.5 0 V1 M673.5 0 V1 M674.5 0 V2 M675.5 0 V1 M676.5 0 V1 M677.5 0 V1 M678.5 0 V1 M679.5 0 V2 M680.5 0 V2 M681.5 0 V1 M682.5 0 V2 M683.5 0 V2 M684.5 0 V2 M685.5 0 V1 M686.5 0 V1 M687.5 0 V1 M688.5 0 V2 M689.5 0 V2 M690.5 0 V1 M691.5 0 V2 M692.5 0 V1 M693.5 0 V1 M694.5 0 V2 M695.5 0 V2 M696.5 0 V2 M697.5 0 V1 M698.5 0 V2 M699.5 0 V1 M700.5 0 V3 M701.5 0 V1 M702.5 0 V1 M703.5 0 V2 M704.5 0 V1 M705.5 0 V1 M706.5 0 V2 M707.5 0 V1 M708.5 0 V2 M709.5 0 V1 M710.5 0 V1 M711.5 0 V2 M712.5 0 V2 M713.5 0 V1 M714.5 0 V2 M715.5 0 V2 M716.5 0 V1 M717.5 0 V2 M718.5 0 V1 M719.5 0 V1 M720.5 0 V2 M721.5 0 V2 M722.5 0 V2 M723.5 0 V3 M724.5 0 V2 M725.5 0 V2 M726.5 0 V2 M727.5 0 V2 M728.5 0 V2 M729.5 0 V3 M730.5 0 V1 M731.5 0 V2 M732.5 0 V2 M733.5 0 V1 M734.5 0 V3 M735.5 0 V2 M736.5 0 V3 M737.5 0 V2 M738.5 0 V2 M739.5 0 V1 M740.5 0 V1 M741.5 0 V1 M742.5 0 V1 M743.5 0 V1 M744.5 0 V2 M745.5 0 V1 M746.5 0 V2 M747.5 0 V3 M748.5 0 V2 M749.5 0 V2 M750.5 0 V2 M751.5 0 V2 M752.5 0 V2 M753.5 0 V1 M754.5 0 V3 M755.5 0 V2 M756.5 0 V2 M757.5 0 V2 M758.5 0 V2 M759.5 0 V2 M760.5 0 V2 M761.5 0 V2 M762.5 0 V1 M763.5 0 V2 M764.5 0 V2 M765.5 0 V1 M766.5 0 V2 M767.5 0 V1 M768.5 0 V2 M769.5 0 V2 M770.5 0 V1 M771.5 0 V3 M772.5 0 V2 M773.5 0 V3 M774.5 0 V2 M775.5 0 V2 M776.5 0 V2 M777.5 0 V2 M778.5 0 V2 M779.5 0 V1 M780.5 0 V2 M781.5 0 V1 M782.5 0 V1 M783.5 0 V1 M784.5 0 V1 M785.5 0 V2 M786.5 0 V1 M787.5 0 V1 M788.5 0 V2 M789.5 0 V2 M790.5 0 V2 M791.5 0 V1 M792.5 0 V1 M793.5 0 V2 M794.5 0 V2 M795.5 0 V1 M796.5 0 V2 M797.5 0 V2 M798.5 0 V2 M799.5 0 V1 M800.5 0 V1 M801.5 0 V1 M802.5 0 V1 M803.5 0 V1 M804.5 0 V2 M805.5 0 V1 M806.5 0 V1 M807.5 0 V3 M808.5 0 V1 M809.5 0 V1 M810.5 0 V3 M811.5 0 V1 M812.5 0 V1 M813.5 0 V1 M814.5 0 V1 M815.5 0 V1 M816.5 0 V1 M817.5 0 V1 M818.5 0 V2 M819.5 0 V2 M820.5 0 V3 M821.5 0 V2 M822.5 0 V2 M823.5 0 V3 M824.5 0 V1 M825.5 0 V2 M826.5 0 V1 M827.5 0 V1 M828.5 0 V1 M829.5 0 V3 M830.5 0 V2 M831.5 0 V3 M832.5 0 V2 M833.5 0 V1 M834.5 0 V2 M835.5 0 V1 M836.5 0 V1 M837.5 0 V2 M838.5 0 V2 M839.5 0 V1 M840.5 0 V1 M841.5 0 V2 M842.5 0 V1 M843.5 0 V2 M844.5 0 V2 M845.5 0 V1 M846.5 0 V2 M847.5 0 V2 M848.5 0 V2 M849.5 0 V2 M850.5 0 V1 M851.5 0 V1 M852.5 0 V2 M853.5 0 V1 M854.5 0 V2 M855.5 0 V3 M856.5 0 V1 M857.5 0 V1 M858.5 0 V3" stroke="#1a2230" stroke-width="1" opacity="0.7"/><path d="M440.5 0 V8 M471.5 0 V9 M522.5 0 V12 M596.5 0 V11 M610.5 0 V10 M632.5 0 V6 M667.5 0 V10 M674.5 0 V6 M853.5 0 V10" stroke="#1a2230" stroke-width="1" opacity="0.5"/><path d="M0.5 3 V70 M9.5 3 V70 M18.5 3 V70 M27.5 3 V70 M36.5 3 V70 M45.5 3 V70 M54.5 3 V70 M63.5 3 V70 M72.5 3 V70 M81.5 3 V70 M90.5 3 V70 M99.5 3 V70 M108.5 3 V70 M117.5 3 V70 M126.5 3 V70 M135.5 3 V70 M144.5 3 V70 M153.5 3 V70 M162.5 3 V70 M171.5 3 V70 M180.5 3 V70 M189.5 3 V70 M198.5 3 V70 M207.5 3 V70 M216.5 3 V70 M225.5 3 V70 M234.5 3 V70 M243.5 3 V70 M252.5 3 V70 M261.5 3 V70 M270.5 3 V70 M279.5 3 V70 M288.5 3 V70 M297.5 3 V70 M306.5 3 V70 M315.5 3 V70 M324.5 3 V70 M333.5 3 V70 M342.5 3 V70 M351.5 3 V70 M360.5 3 V70 M369.5 3 V70 M378.5 3 V70 M387.5 3 V70 M396.5 3 V70 M405.5 3 V70 M414.5 3 V70 M423.5 3 V70 M432.5 3 V70 M441.5 3 V70 M450.5 3 V70 M459.5 3 V70 M468.5 3 V70 M477.5 3 V70 M486.5 3 V70 M495.5 3 V70 M504.5 3 V70 M513.5 3 V70 M522.5 3 V70 M531.5 3 V70 M540.5 3 V70 M549.5 3 V70 M558.5 3 V70 M567.5 3 V70 M576.5 3 V70 M585.5 3 V70 M594.5 3 V70 M603.5 3 V70 M612.5 3 V70 M621.5 3 V70 M630.5 3 V70 M639.5 3 V70 M648.5 3 V70 M657.5 3 V70 M666.5 3 V70 M675.5 3 V70 M684.5 3 V70 M693.5 3 V70 M702.5 3 V70 M711.5 3 V70 M720.5 3 V70 M729.5 3 V70 M738.5 3 V70 M747.5 3 V70 M756.5 3 V70 M765.5 3 V70 M774.5 3 V70 M783.5 3 V70 M792.5 3 V70 M801.5 3 V70 M810.5 3 V70 M819.5 3 V70 M828.5 3 V70 M837.5 3 V70 M846.5 3 V70 M855.5 3 V70" stroke="#000" stroke-width="1" opacity="0.03"/>
<rect x="578.2" y="0" width="14" height="13.4" fill="#3e7a48"/><rect x="578.2" y="56.4" width="14" height="13.6" fill="#3e7a48"/>
<rect x="584.2" y="0" width="1.6" height="70" fill="#3e7a48"/>
<rect x="660.7" y="0" width="14.3" height="13.4" fill="#7c352e"/><rect x="660.7" y="56.4" width="14.3" height="13.6" fill="#7c352e"/>
<rect x="667.6" y="0" width="1.2" height="70" fill="#7c352e"/>
<rect x="0" y="17" width="46" height="31.8" fill="#0b111b"/>
<rect x="813" y="17" width="45.5" height="31.8" fill="#121212"/>
</svg>
<div class="t" style="left:625.30px;top:951.66px;font-size:19.77px;color:#8e8e8e;transform:scaleX(0.9409);">5:05</div>
<div class="t" style="left:1437.40px;top:951.44px;font-size:19.91px;color:#8e8e8e;transform:scaleX(0.9574);">7:23</div>
<div class="t" style="left:1499.00px;top:947.42px;font-size:31.52px;color:#858585;font-weight:bold;transform:scaleX(0.9568);">124</div>
<div class="t" style="left:1049.50px;top:1025.71px;font-size:19.48px;color:#7a7a7a;transform:scaleX(1.0586);">Total duration: 12 days 14 hours 16 minutes 37 seconds</div>
</div></div>
</body></html>
